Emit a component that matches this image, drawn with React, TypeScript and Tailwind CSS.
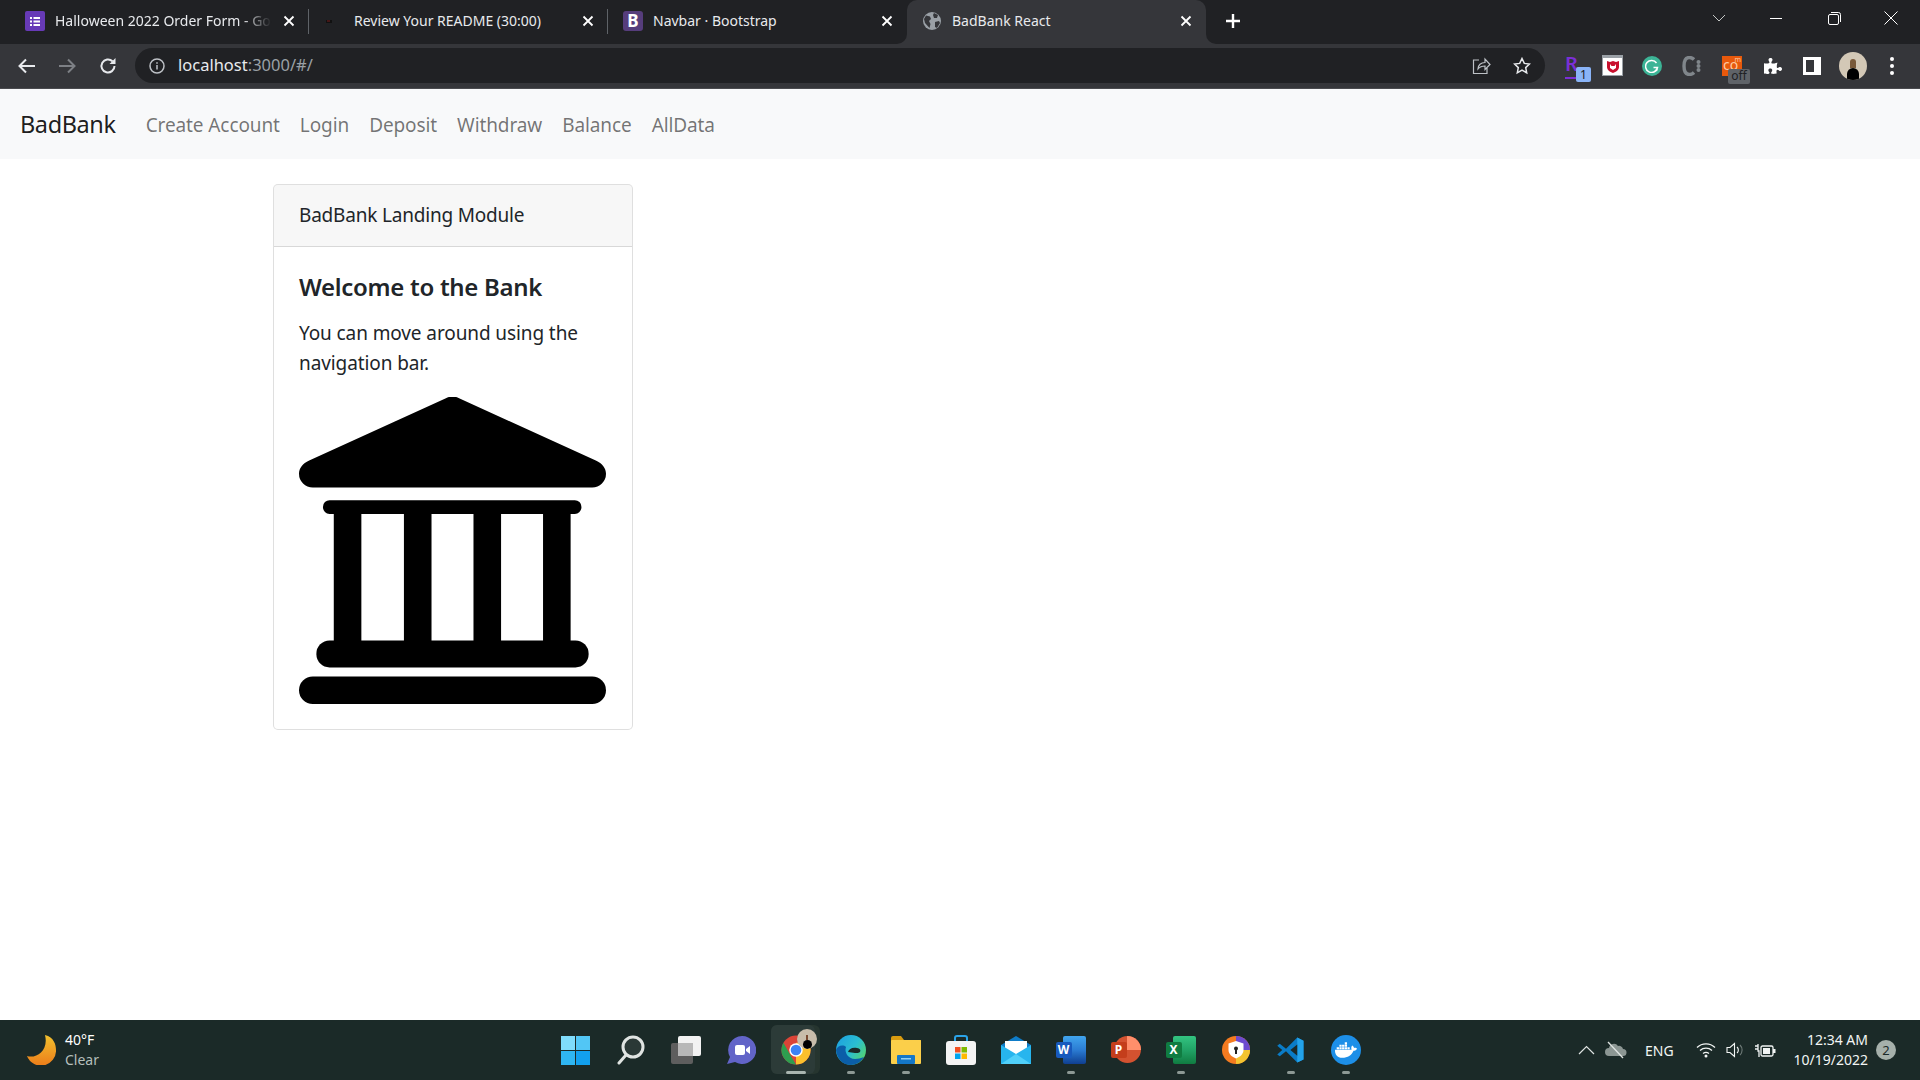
import { FaDocker, FaPuzzlePiece } from "react-icons/fa"

const ui = "font-['Noto_Sans','Open_Sans',sans-serif]"

const CloseX = () => (
    <svg width="12" height="12" viewBox="0 0 12 12" className="shrink-0">
        <path d="M1.5 1.5l9 9M10.5 1.5l-9 9" stroke="#fff" strokeWidth="1.8" />
    </svg>
)

const FormsIcon = () => (
    <svg width="20" height="20" viewBox="0 0 20 20">
        <rect width="20" height="20" rx="2" fill="#673ab7" />
        <path d="M5 6h2v2H5zM8.5 6H15v2H8.5zM5 9.5h2v2H5zM8.5 9.5H15v2H8.5zM5 13h2v2H5zM8.5 13H15v2H8.5z" fill="#fff" />
    </svg>
)

const RedIcon = () => (
    <svg width="20" height="20" viewBox="0 0 20 20">
        <rect x="2" y="9" width="6" height="3" fill="#111" />
        <rect x="3" y="9.5" width="3" height="1" fill="#7a1f1f" />
    </svg>
)

const BootstrapIcon = () => (
    <div className="w-5 h-5 rounded-[3px] bg-[#563d7c] flex items-center justify-center text-white text-[17px] font-bold leading-none">B</div>
)

const GlobeIcon = () => (
    <svg width="18" height="18" viewBox="0 0 18 18">
        <circle cx="9" cy="9" r="9" fill="#9aa0a6" />
        <path d="M3 3.5l4 1 1 2.5-2 2 1.5 3-1 4L2 11 1 7zM11 1l4 2-1 3-3 0-1-3zM12 10l4-1 1 2-3 5-2-1z" fill="#35363a" />
    </svg>
)

const Tab = ({ icon, title, active, fade }: { icon: React.ReactNode, title: string, active?: boolean, fade?: boolean }) => (
    <div className={`relative w-[299px] h-[44px] pb-[3px] flex items-center shrink-0 pl-[15px] pr-[14px] ${active ? "bg-[#35363a] rounded-t-[10px]" : ""}`}>
        {active && (
            <>
                <div className="absolute -left-[10px] bottom-0 w-[10px] h-[10px] bg-[#35363a]">
                    <div className="w-full h-full bg-[#202124] rounded-br-[10px]" />
                </div>
                <div className="absolute -right-[10px] bottom-0 w-[10px] h-[10px] bg-[#35363a]">
                    <div className="w-full h-full bg-[#202124] rounded-bl-[10px]" />
                </div>
            </>
        )}
        <div className="w-5 h-5 flex items-center justify-center shrink-0">{icon}</div>
        <div className={`ml-[10px] flex-1 overflow-hidden whitespace-nowrap text-[14px] text-[#e8eaed] ${fade ? "[mask-image:linear-gradient(to_right,black_82%,transparent_95%)]" : ""}`}>
            {title}
        </div>
        <CloseX />
    </div>
)

const Sep = () => <div className="w-px h-[25px] bg-[#5f6368] mt-[9px] -ml-px shrink-0" />

const TabStrip = () => (
    <div className="h-[44px] bg-[#202124] flex pl-[10px] items-start shrink-0">
        <Tab icon={<FormsIcon />} title="Halloween 2022 Order Form - Google Forms" fade />
        <Sep />
        <Tab icon={<RedIcon />} title="Review Your README (30:00)" />
        <Sep />
        <Tab icon={<BootstrapIcon />} title="Navbar · Bootstrap" />
        <Tab icon={<GlobeIcon />} title="BadBank React" active />
        <svg width="16" height="16" viewBox="0 0 16 16" className="ml-[19px] mt-[13px] shrink-0">
            <path d="M8 1v14M1 8h14" stroke="#fff" strokeWidth="2.4" />
        </svg>
        <div className="ml-auto flex items-center h-[36px] text-[#e8eaed]">
            <svg width="14" height="8" viewBox="0 0 14 8" className="mr-[44px]">
                <path d="M1 1l6 6 6-6" stroke="#c4c7c5" fill="none" />
            </svg>
            <div className="w-[12px] h-px bg-white mr-[46px]" />
            <svg width="13" height="13" viewBox="0 0 13 13" className="mr-[43px]">
                <rect x="0.5" y="2.5" width="10" height="10" rx="1.5" fill="none" stroke="#fff" />
                <path d="M3 .5h7.5a2 2 0 0 1 2 2V10" fill="none" stroke="#fff" />
            </svg>
            <svg width="14" height="14" viewBox="0 0 14 14" className="mr-[22px]">
                <path d="M.5.5l13 13M13.5.5l-13 13" stroke="#fff" />
            </svg>
        </div>
    </div>
)

const ExtensionIcons = () => (
    <div className="flex items-center">
        <div className="relative w-[24px] h-[26px] ml-[20px] text-[#7b2fd6] text-[20px] font-semibold leading-[22px]">
            R
            <div className="absolute left-0 bottom-0 w-[11px] h-[2px] bg-[#7b2fd6]" />
            <div className="absolute -right-[2px] -bottom-[3px] w-[15px] h-[15px] rounded-[2px] bg-[#8ab4f8] text-[#202124] text-[12px] font-normal leading-[15px] text-center">1</div>
        </div>
        <div className="ml-[13px] w-[21px] h-[21px] bg-white border-t-[3px] border-x border-b border-[#9aa0a6] flex items-center justify-center">
            <svg width="12" height="13" viewBox="0 0 12 13">
                <path d="M0 1l3 1 3-1 3 1 3-1v6c0 3-3 5-6 6-3-1-6-3-6-6zM3 4v4l3 2 3-2V4L7.500 6h-3z" fill="#c8102e" fillRule="evenodd" />
            </svg>
        </div>
        <div className="ml-[19px] w-[20px] h-[20px] rounded-full bg-[#3cb496] flex items-center justify-center">
            <svg width="14" height="14" viewBox="0 0 14 14">
                <path d="M11.500 4A6 6 0 1 0 12.500 8.500H8.500M12 8.500v3" stroke="#fff" strokeWidth="1.500" fill="none" />
            </svg>
        </div>
        <div className="ml-[20px] w-[20px] h-[24px] flex items-center gap-[1px] shrink-0">
            <svg width="13" height="20" viewBox="0 0 13 20">
                <path d="M12 3.500C10.500 2 9 1.500 7.500 1.500 4 1.500 2 4.500 2 10s2 8.500 5.500 8.500c1.500 0 3-.5 4.500-2" stroke="#80868b" strokeWidth="3.400" fill="none" />
            </svg>
            <svg width="5" height="14" viewBox="0 0 5 14">
                <circle cx="2.500" cy="3" r="2" fill="#80868b" />
                <circle cx="2.500" cy="7" r="2" fill="#80868b" />
                <circle cx="2.500" cy="11" r="2" fill="#80868b" />
            </svg>
        </div>
        <div className="relative ml-[20px] w-[20px] h-[20px] bg-[#e8590c] text-[#ffc9a3] text-[14px] leading-[17px] pl-[1px]">
            co<span className="absolute right-[1px] top-0 text-[7px] leading-[8px]">m</span>
            <div className="absolute -right-[8px] bottom-[-8px] w-[22px] h-[15px] rounded-[2px] bg-[#5f6368] text-[#202124] text-[12px] leading-[14px] text-center">off</div>
        </div>
        <div className="ml-[21px] w-[20px] flex justify-center text-white">
            <FaPuzzlePiece size={18} />
        </div>
        <div className="ml-[20px] w-[18px] h-[18px] bg-white p-[3px] pr-[7px]">
            <div className="w-full h-full bg-[#35363a]" />
        </div>
        <div className="ml-[18px] w-[28px] h-[28px] rounded-full bg-[#d3c8b6] overflow-hidden flex flex-col items-center justify-end">
            <div className="w-[6px] h-[9px] rounded-t-full bg-[#7a5a3a]" />
            <div className="w-[12px] h-[12px] rounded-t-[6px] bg-black" />
        </div>
        <div className="ml-[23px] flex flex-col gap-[3px]">
            <div className="w-1 h-1 rounded-full bg-white" />
            <div className="w-1 h-1 rounded-full bg-white" />
            <div className="w-1 h-1 rounded-full bg-white" />
        </div>
    </div>
)

const Toolbar = () => (
    <div className="h-[45px] bg-[#35363a] flex items-center pl-[18px] pb-[1px] border-b border-[#4a4b4f] shrink-0">
        <svg width="18" height="16" viewBox="0 0 18 16">
            <path d="M17 8H2M8 1.500L1.500 8 8 14.500" stroke="#e8eaed" strokeWidth="2" fill="none" />
        </svg>
        <svg width="18" height="16" viewBox="0 0 18 16" className="ml-[22px]">
            <path d="M1 8h15M10 1.500L16.500 8 10 14.500" stroke="#7d8085" strokeWidth="2" fill="none" />
        </svg>
        <svg width="18" height="18" viewBox="0 0 18 18" className="ml-[23px]">
            <path d="M15.500 9A6.500 6.500 0 1 1 13.500 4.300" stroke="#e8eaed" strokeWidth="2" fill="none" />
            <path d="M16.500 1v6h-6z" fill="#e8eaed" />
        </svg>
        <div className="ml-[18px] w-[1410px] h-[35px] rounded-full bg-[#202124] flex items-center pl-[14px] pr-[14px] shrink-0">
            <svg width="16" height="16" viewBox="0 0 16 16">
                <circle cx="8" cy="8" r="7" stroke="#bdc1c6" strokeWidth="1.500" fill="none" />
                <path d="M8 7v4.500M8 4.200v1.600" stroke="#bdc1c6" strokeWidth="1.500" />
            </svg>
            <div className="ml-[13px] text-[16.500px] text-[#e8eaed]">
                localhost<span className="text-[#9aa0a6]">:3000/#/</span>
            </div>
            <svg width="19" height="18" viewBox="0 0 19 18" className="ml-auto">
                <path d="M7 3H1.500v13.500H15V11M6 12c0-4 3-6.500 7-6.500V2l5 5.500-5 5V9c-3 0-5 .5-7 3z" stroke="#bdc1c6" strokeWidth="1.200" fill="none" />
            </svg>
            <svg width="18" height="18" viewBox="0 0 18 18" className="ml-[22px]">
                <path d="M9 1.500l2.300 4.900 5.200.6-3.800 3.600 1 5.200L9 13.200l-4.700 2.600 1-5.200L1.500 7l5.200-.6z" stroke="#e8eaed" strokeWidth="1.500" fill="none" />
            </svg>
        </div>
        <ExtensionIcons />
    </div>
)

const Navbar = () => (
    <nav className="h-[70px] pt-[2px] bg-[#f8f9fa] flex items-center pl-[20px] shrink-0">
        <div className="text-[23.500px] tracking-[-0.4px] text-[#000000e6] mr-[20px]">BadBank</div>
        <div className="flex text-[19px] tracking-[-0.1px] text-[#0000008c]">
            {["Create Account", "Login", "Deposit", "Withdraw", "Balance", "AllData"].map(x => (
                <div key={x} className="px-[10px]">{x}</div>
            ))}
        </div>
    </nav>
)

const BankIcon = () => (
    <svg width="307" height="307" viewBox="0 0 512 512" className="mt-[19px]">
        <path d="M245 2a24 24 0 0 1 22 0L495 106c11 5 17 13 17 22a23 23 0 0 1-23 23H23a23 23 0 0 1-23-23c0-9 6-17 17-22z" />
        <rect x="40" y="172" width="431" height="23" rx="11" />
        <path d="M58 190h46v220H58zM175 190h46v220h-46zM291 190h46v220h-46zM407 190h46v220h-46z" />
        <rect x="29" y="406" width="454" height="45" rx="22" />
        <rect x="0" y="466" width="512" height="46" rx="23" />
    </svg>
)

const Card = () => (
    <div className="w-[360px] ml-[273px] mt-[25px] border border-[#00000020] rounded-[5px] bg-white overflow-hidden text-[#212529]">
        <div className="h-[62px] bg-[#00000008] border-b border-[#00000020] px-[25px] flex items-center text-[19px] tracking-[-0.2px]">
            BadBank Landing Module
        </div>
        <div className="p-[25px] pb-[25px]">
            <h5 className="text-[24px] font-semibold tracking-[-0.3px] leading-[30px]">Welcome to the Bank</h5>
            <p className="text-[19px] tracking-[-0.1px] leading-[30px] mt-[16px]">You can move around using the navigation bar.</p>
            <BankIcon />
        </div>
    </div>
)

const Slot = ({ children, dot }: { children: React.ReactNode, dot?: boolean }) => (
    <div className="relative w-[55px] h-[60px] flex items-center justify-center shrink-0">
        {children}
        {dot && <div className="absolute bottom-[6px] w-2 h-[3px] rounded-full bg-[#8d9995]" />}
    </div>
)

const Taskbar = () => (
    <div className={`h-[60px] bg-[#1b2a28] flex items-center relative shrink-0 text-white ${ui}`}>
        <div className="flex items-center pl-[26px] w-[548px] shrink-0">
            <svg width="30" height="30" viewBox="0 0 30 30">
                <defs>
                    <linearGradient id="moon" x1="0" y1="0" x2="0" y2="1">
                        <stop offset="0" stopColor="#f2c12e" />
                        <stop offset="1" stopColor="#ec7d1a" />
                    </linearGradient>
                </defs>
                <path d="M19 0c9 2 11 10 11 15a15 15 0 0 1-29 6c9 3 22-5 18-21z" fill="url(#moon)" />
            </svg>
            <div className="ml-[9px] text-[14px] leading-[20px]">
                <div>40°F</div>
                <div className="text-[#b5bfbc]">Clear</div>
            </div>
        </div>
        <Slot>
            <div className="grid grid-cols-2 gap-[1px] w-[29px] h-[29px]">
                <div className="bg-[#7fdcfb]" /><div className="bg-[#52c6f5]" />
                <div className="bg-[#2fb6f2]" /><div className="bg-[#12a0ee]" />
            </div>
        </Slot>
        <Slot>
            <svg width="30" height="30" viewBox="0 0 30 30">
                <circle cx="17" cy="12" r="10" stroke="#e0e4e2" strokeWidth="3" fill="#2a3836" />
                <path d="M10 20l-7 8" stroke="#e0e4e2" strokeWidth="3" strokeLinecap="round" />
            </svg>
        </Slot>
        <Slot>
            <svg width="32" height="30" viewBox="0 0 32 30">
                <rect x="1" y="8" width="22" height="21" rx="2" fill="#5e5e5e" />
                <rect x="8" y="1" width="23" height="20" rx="2" fill="#f2f2f2" />
                <rect x="8" y="8" width="15" height="13" fill="#b8b8b8" />
            </svg>
        </Slot>
        <Slot>
            <svg width="30" height="30" viewBox="0 0 30 30">
                <path d="M16 1a14 14 0 1 1-7 26l-8 2 3-7A14 14 0 0 1 16 1z" fill="#6264c8" />
                <rect x="9" y="10" width="10" height="10" rx="2" fill="#fff" />
                <path d="M20 14l4-3v8l-4-3z" fill="#fff" />
            </svg>
        </Slot>
        <div className="relative w-[55px] h-[60px] flex items-center justify-center shrink-0">
            <div className="absolute left-[3px] top-[5px] w-[49px] h-[49px] rounded-[6px] bg-[#26352f]" />
            <div className="absolute left-[3px] top-[5px] w-[44px] h-[49px] rounded-[6px] bg-[#2c3b38]" />
            <svg width="30" height="30" viewBox="0 0 31 31" className="relative">
                <circle cx="15.500" cy="15.500" r="15" fill="#db4437" />
                <path d="M15.500 30.500a15 15 0 0 0 13-22.500H15.500z" fill="#fbc02d" />
                <path d="M15.500 30.500A15 15 0 0 1 2.500 8l7 12.500z" fill="#2e9e4f" />
                <circle cx="15.500" cy="15.500" r="7" fill="#fff" />
                <circle cx="15.500" cy="15.500" r="5.500" fill="#3b82f6" />
            </svg>
            <div className="absolute left-[29px] top-[9px] w-[20px] h-[20px] rounded-full bg-[#c9bdaa] overflow-hidden flex flex-col items-center justify-end">
                <div className="w-[2px] h-[5px] bg-[#7a4a30]" />
                <div className="w-[9px] h-[9px] rounded-full bg-black" />
            </div>
            <div className="absolute bottom-[6px] left-[18px] w-5 h-[3px] rounded-full bg-[#a9b5b0]" />
        </div>
        <Slot dot>
            <svg width="30" height="30" viewBox="0 0 30 30">
                <defs>
                    <linearGradient id="edge" x1="0" y1="0" x2="1" y2="0.7">
                        <stop offset="0" stopColor="#1b9de2" />
                        <stop offset="0.6" stopColor="#2bbfd0" />
                        <stop offset="1" stopColor="#54d36f" />
                    </linearGradient>
                </defs>
                <circle cx="15" cy="15" r="15" fill="url(#edge)" />
                <path d="M28 22c-3 5-8 8-13 8C7 30 1 24 0 15c1-4 7-6 10-3-2 5 2 12 9 12 3 0 6-1 9-2z" fill="#0b5ea8" />
                <path d="M12 17c1-3 4-5 9-4 3 .5 4 2 3 4-1 1-3 1-5 1z" fill="#1b2a28" />
            </svg>
        </Slot>
        <Slot dot>
            <svg width="30" height="28" viewBox="0 0 30 28">
                <path d="M0 2a2 2 0 0 1 2-2h8l3 4h17v4H0z" fill="#d99c10" />
                <rect y="4" width="30" height="24" rx="1" fill="#fbcf4a" />
                <rect x="6" y="19" width="18" height="9" rx="1" fill="#1477c8" />
                <rect x="10" y="22" width="10" height="1.500" fill="#8fd0f5" />
            </svg>
        </Slot>
        <Slot>
            <svg width="30" height="30" viewBox="0 0 30 30">
                <path d="M9 6V3a2 2 0 0 1 2-2h8a2 2 0 0 1 2 2v3" stroke="#2aa3e8" strokeWidth="2" fill="none" />
                <rect y="6" width="30" height="24" rx="3" fill="#f4f4f4" />
                <rect x="9" y="12" width="5.500" height="5.500" fill="#f25022" />
                <rect x="15.500" y="12" width="5.500" height="5.500" fill="#7fba00" />
                <rect x="9" y="18.500" width="5.500" height="5.500" fill="#00a4ef" />
                <rect x="15.500" y="18.500" width="5.500" height="5.500" fill="#ffb900" />
            </svg>
        </Slot>
        <Slot>
            <svg width="30" height="28" viewBox="0 0 30 28">
                <path d="M0 9L15 0l15 9v19H0z" fill="#0f7cc8" />
                <path d="M4 5h22v12l-11 6-11-6z" fill="#fff" />
                <path d="M0 9l15 9 15-9v19H0z" fill="#27b5ee" />
                <path d="M0 28l15-10 15 10z" fill="#50d0fa" />
            </svg>
        </Slot>
        <Slot dot>
            <div className="relative w-[30px] h-[28px]">
                <div className="absolute right-0 top-0 w-[23px] h-[28px] rounded-[2px] bg-gradient-to-b from-[#41a5ee] via-[#2b7cd3] to-[#103f91]" />
                <div className="absolute left-0 top-[6px] w-[16px] h-[16px] rounded-[2px] bg-[#185abd] text-white text-[12px] font-bold leading-[16px] text-center">W</div>
            </div>
        </Slot>
        <Slot>
            <div className="relative w-[30px] h-[28px]">
                <div className="absolute right-0 top-0 w-[27px] h-[27px] rounded-full bg-[#d35230]" />
                <div className="absolute right-0 top-0 w-[14px] h-[14px] rounded-tr-full bg-[#ff8f6b]" />
                <div className="absolute left-0 top-[6px] w-[16px] h-[16px] rounded-[2px] bg-[#c43e1c] text-white text-[12px] font-bold leading-[16px] text-center">P</div>
            </div>
        </Slot>
        <Slot dot>
            <div className="relative w-[30px] h-[28px]">
                <div className="absolute right-0 top-0 w-[23px] h-[28px] rounded-[2px] bg-gradient-to-b from-[#33c481] via-[#21a366] to-[#107c41]" />
                <div className="absolute left-0 top-[6px] w-[16px] h-[16px] rounded-[2px] bg-[#107c41] text-white text-[12px] font-bold leading-[16px] text-center">X</div>
            </div>
        </Slot>
        <Slot>
            <svg width="28" height="28" viewBox="0 0 28 28">
                <circle cx="14" cy="14" r="14" fill="#f47b20" />
                <path d="M14 0a14 14 0 0 1 14 14H14z" fill="#6d4ad0" />
                <path d="M28 14a14 14 0 0 1-14 14V14z" fill="#f4c430" />
                <path d="M14 5l7.500 2.500V14c0 4-3.500 7-7.500 8.500-4-1.500-7.500-4.500-7.500-8.500V7.500z" fill="#fff" />
                <circle cx="14" cy="12.500" r="2" fill="#222" />
                <rect x="13" y="13" width="2" height="5" fill="#222" />
            </svg>
        </Slot>
        <Slot dot>
            <svg width="30" height="30" viewBox="0 0 24 24">
                <path d="M1 8.500L3 7l5 4 9-9 5 2.500v15L17 22l-9-9-5 4-2-1.500L5 12z" fill="#0a7cc7" />
                <path d="M17 2l5 2.500v15L17 22z" fill="#23a3ea" />
                <path d="M17 7.500v9L11.500 12z" fill="#1b2a28" />
            </svg>
        </Slot>
        <Slot dot>
            <div className="w-[30px] h-[30px] rounded-full bg-[#1d8fe8] flex items-center justify-center text-white">
                <FaDocker size={22} />
            </div>
        </Slot>
        <div className="ml-auto flex items-center pr-[24px] text-[#f2f5f4]">
            <svg width="17" height="10" viewBox="0 0 17 10">
                <path d="M1 9l7.500-7.500L16 9" stroke="#dfe4e2" strokeWidth="1.200" fill="none" />
            </svg>
            <svg width="22" height="18" viewBox="0 0 22 18" className="ml-[10px]">
                <path d="M4 15a4 4 0 0 1 0-8 5 5 0 0 1 9-2 4 4 0 0 1 5 3 3.500 3.500 0 0 1 0 7z" fill="#8c9693" />
                <path d="M3 1l15 16" stroke="#dfe4e2" strokeWidth="1.300" />
            </svg>
            <div className="ml-[18px] text-[14px] w-[30px]">ENG</div>
            <svg width="20" height="16" viewBox="0 0 20 16" className="ml-[21px]">
                <path d="M1 5.500a13 13 0 0 1 18 0M4 8.500a9 9 0 0 1 12 0M7 11.500a5 5 0 0 1 6 0" stroke="#f2f5f4" strokeWidth="1.300" fill="none" />
                <circle cx="10" cy="14" r="1.500" fill="#f2f5f4" />
            </svg>
            <svg width="20" height="16" viewBox="0 0 20 16" className="ml-[10px]">
                <path d="M1 5.500h3L8.500 1.500v13L4 10.500H1z" stroke="#f2f5f4" strokeWidth="1.100" fill="none" />
                <path d="M11 5a4 4 0 0 1 0 6" stroke="#f2f5f4" strokeWidth="1.100" fill="none" />
                <path d="M14 3a7 7 0 0 1 0 10" stroke="#6e7a77" strokeWidth="1.100" fill="none" />
            </svg>
            <svg width="21" height="15" viewBox="0 0 21 15" className="ml-[9px]">
                <path d="M0 3h3M0 6h3M3 1v7h1v6" stroke="#f2f5f4" strokeWidth="1.300" fill="none" />
                <rect x="6" y="3" width="12" height="10" rx="1.500" stroke="#f2f5f4" strokeWidth="1.300" fill="#1b2a28" />
                <rect x="8" y="5" width="7" height="6" fill="#f2f5f4" />
                <rect x="18" y="6" width="2.500" height="4" fill="#f2f5f4" />
            </svg>
            <div className="ml-[14px] text-[14px] leading-[20px] text-right w-[78px]">
                <div>12:34 AM</div>
                <div>10/19/2022</div>
            </div>
            <div className="ml-[8px] w-[20px] h-[20px] rounded-full bg-[#a6b0ab] text-[#1b2a28] text-[13px] leading-[20px] text-center">2</div>
        </div>
    </div>
)

export default function App() {
    return (
        <div className={`w-[1920px] h-[1080px] flex flex-col overflow-hidden bg-white ${ui}`}>
            <TabStrip />
            <Toolbar />
            <Navbar />
            <main className="flex-1">
                <Card />
            </main>
            <Taskbar />
        </div>
    )
}
